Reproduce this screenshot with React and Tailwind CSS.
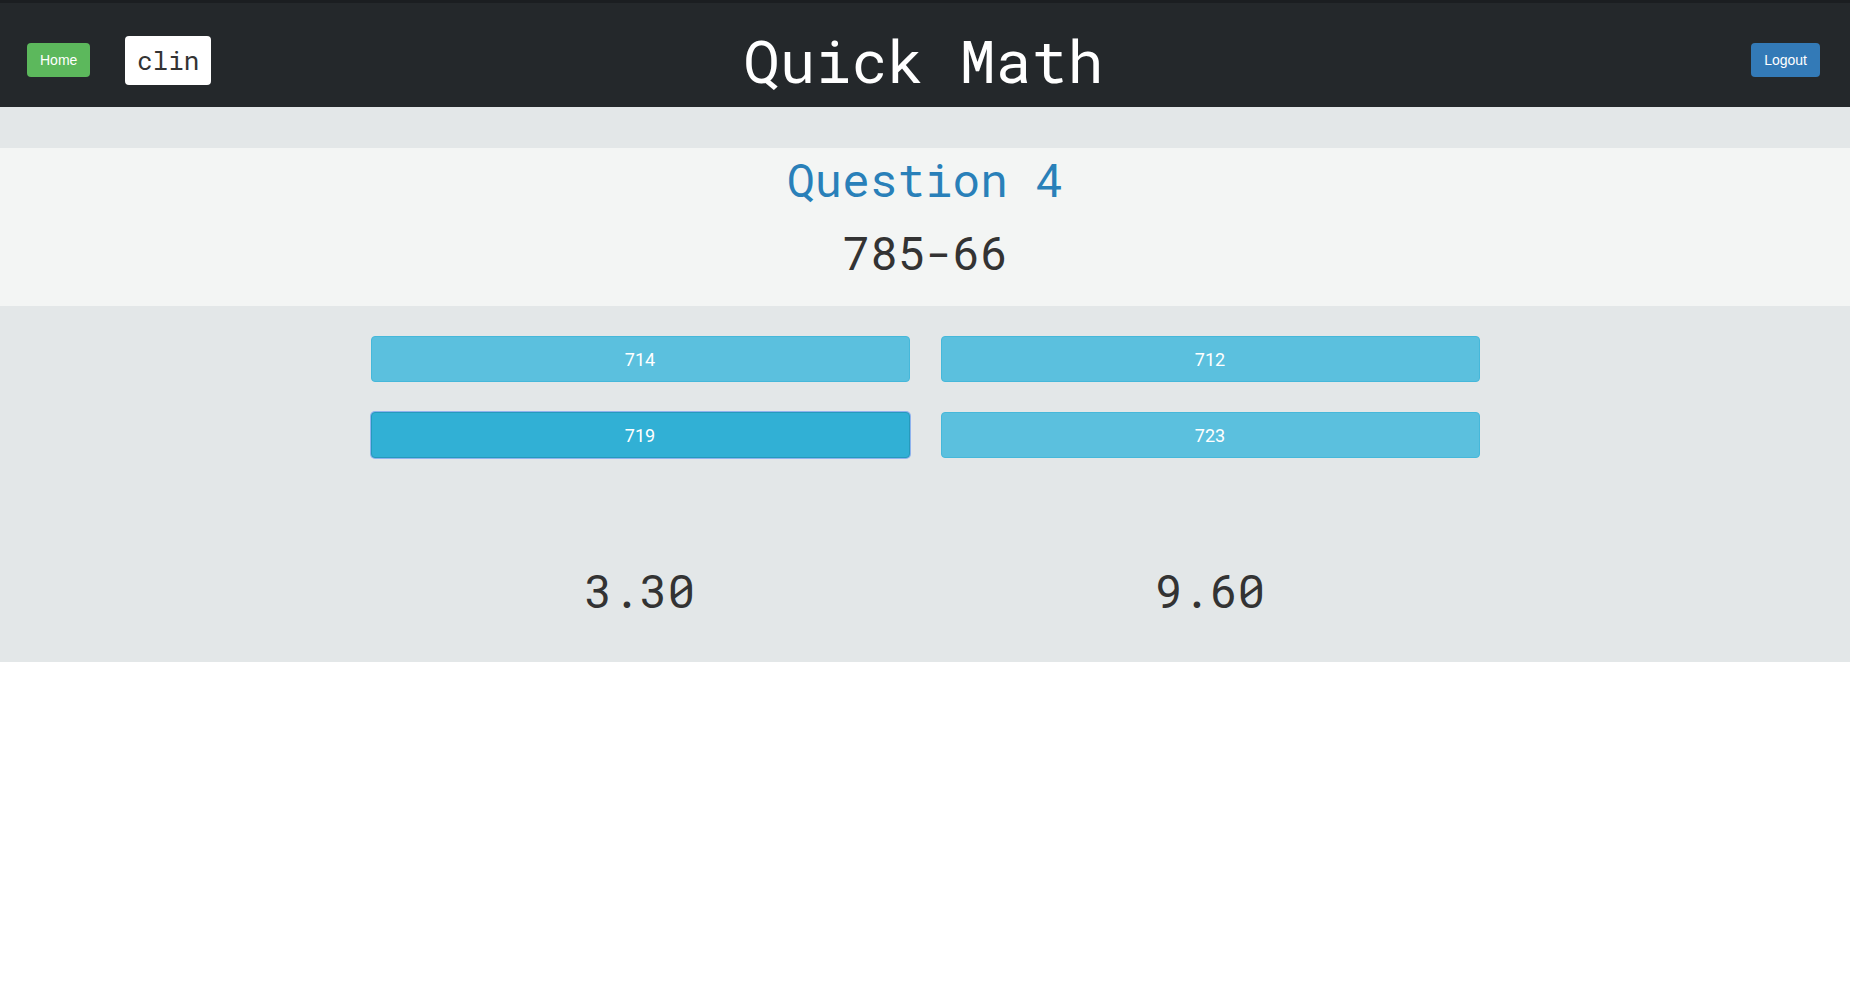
import React, { useState } from 'react';

const MONO = "font-['Roboto_Mono','Liberation_Mono','DejaVu_Sans_Mono',monospace]";

const choices = [714, 712, 719, 723];

const App = () => {
  const [picked, setPicked] = useState(719);

  return (
    <div className="min-h-[984px] bg-white">
      {/* Top bar */}
      <header className="h-[107px] border-t-[3px] border-[#1b1e21] bg-[#24282b] flex items-center pt-[10px] pl-[27px] pr-[30px]">
        <div className="w-[184px] flex items-center gap-[35px]">
          <button className="h-[34px] px-[13px] rounded-[4px] bg-[#5cb85c] text-white text-[14px] font-['Liberation_Sans',Arial,sans-serif]">
            Home
          </button>
          <div className={`h-[49px] w-[86px] rounded-[4px] bg-white flex items-center justify-center text-[26px] text-[#333] ${MONO}`}>
            clin
          </div>
        </div>
        <h1 className={`flex-1 text-center text-white text-[60px] leading-[60px] ${MONO}`}>
          Quick Math
        </h1>
        <div className="w-[184px] flex justify-end">
          <button className="h-[34px] px-[13px] rounded-[4px] bg-[#337ab7] text-white text-[14px] font-['Liberation_Sans',Arial,sans-serif]">
            Logout
          </button>
        </div>
      </header>

      <div className="h-[41px] bg-[#e3e7e8]" />

      {/* Question */}
      <section className={`bg-[#f3f5f4] pt-[8px] pb-[31px] text-center ${MONO}`}>
        <h2 className="text-[46px] leading-[46px] text-[#2980b9]">Question 4</h2>
        <p className="mt-[27px] text-[46px] leading-[46px] text-[#333]">785-66</p>
      </section>

      {/* Answers */}
      <section className="bg-[#e3e7e8] pt-[30px] pb-[49px]">
        <div className="w-[1109px] mx-auto grid grid-cols-2 gap-x-[31px] gap-y-[30px]">
          {choices.map((c) => (
            <button
              key={c}
              onClick={() => setPicked(c)}
              className={
                picked === c
                  ? "h-[46px] rounded-[4px] border border-[#269abc] bg-[#31b0d5] ring-1 ring-[#8fb3ee] text-white text-[18px] font-['Roboto',sans-serif]"
                  : "h-[46px] rounded-[4px] border border-[#46b8da] bg-[#5bc0de] text-white text-[18px] font-['Roboto',sans-serif]"
              }
            >
              {c}
            </button>
          ))}
        </div>
        <div className={`w-[1109px] mx-auto mt-[109px] grid grid-cols-2 gap-x-[31px] text-center text-[46px] leading-[46px] text-[#333] ${MONO}`}>
          <div>3.30</div>
          <div>9.60</div>
        </div>
      </section>
    </div>
  );
};

export default App;
